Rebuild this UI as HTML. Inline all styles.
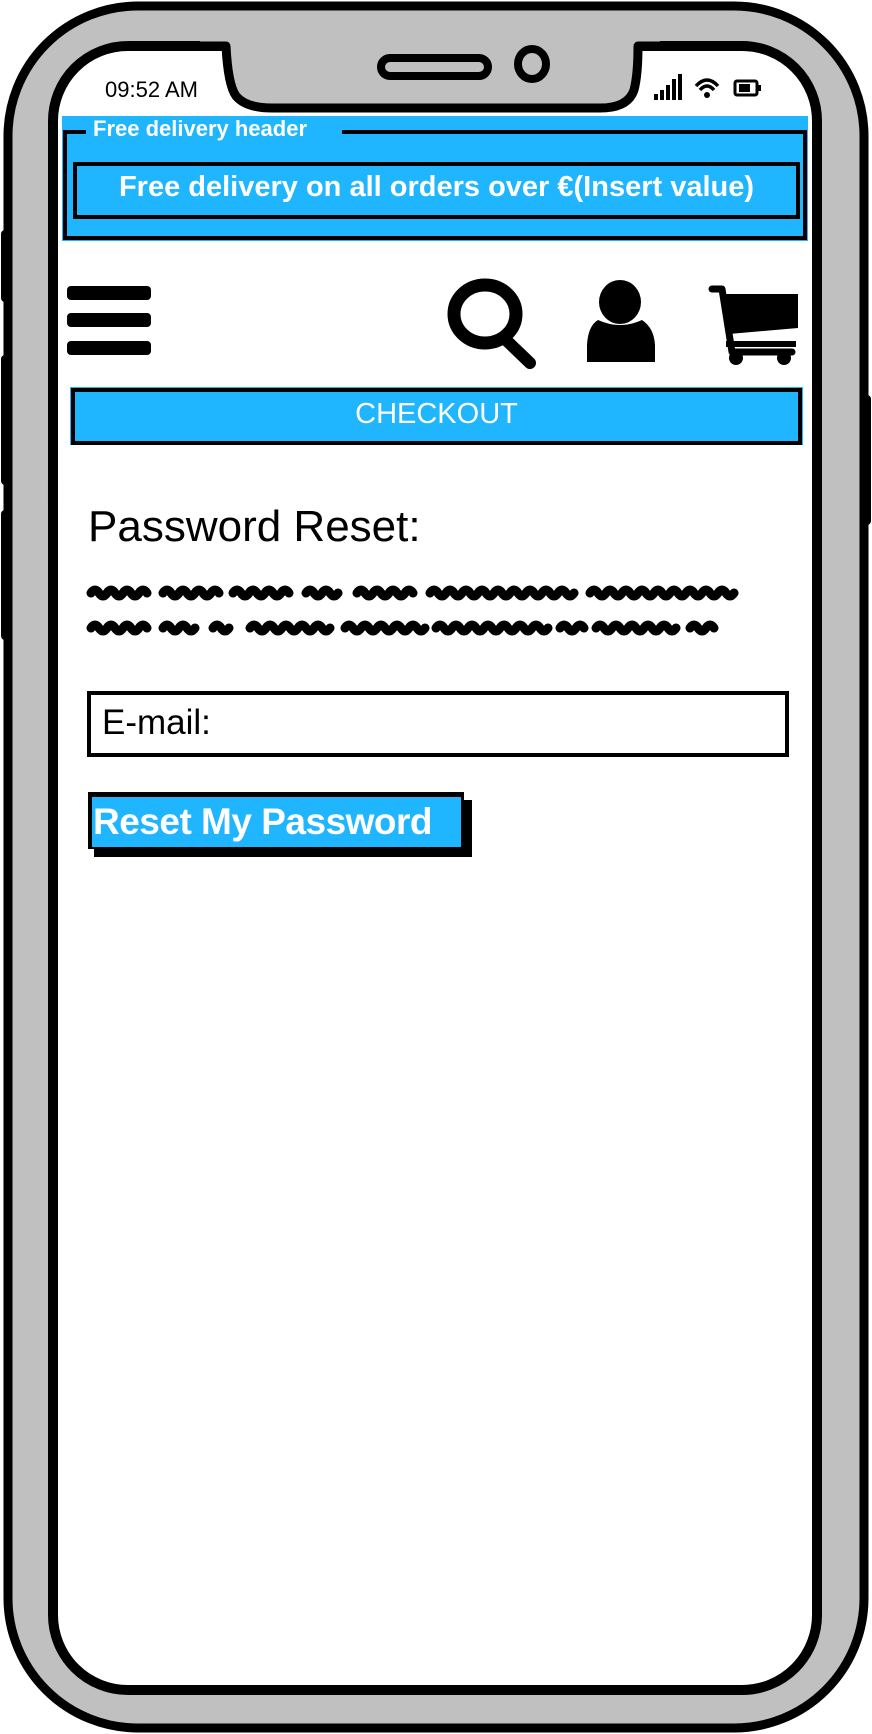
<!DOCTYPE html>
<html><head><meta charset="utf-8"><style>
html,body{margin:0;padding:0;background:#fff}
body{width:872px;height:1734px;position:relative;overflow:hidden;font-family:"Liberation Sans",sans-serif}
.a{position:absolute;white-space:nowrap}
</style></head><body>
<svg class="a" style="left:0;top:0" width="872" height="1734" viewBox="0 0 872 1734">
  <rect x="1" y="230" width="10" height="72" rx="4" fill="#000"/>
  <rect x="1" y="355" width="10" height="130" rx="4" fill="#000"/>
  <rect x="1" y="510" width="10" height="130" rx="4" fill="#000"/>
  <rect x="861" y="395" width="10" height="130" rx="4" fill="#000"/>
  <rect x="8" y="6" width="856" height="1722" rx="130" fill="#c0c0c0" stroke="#000" stroke-width="9"/>
  <rect x="53" y="46" width="764" height="1644" rx="75" fill="#fff" stroke="#000" stroke-width="10"/>
  <path d="M200 30 L200 46 L226 46 Q228 85 236 96 Q246 108 272 108 L600 108 Q628 108 634 90 Q638 75 638 46 L660 46 L660 30 Z" fill="#c0c0c0"/>
  <path d="M190 46 L226 46 Q228 85 236 96 Q246 108 272 108 L600 108 Q628 108 634 90 Q638 75 638 46 L675 46" fill="none" stroke="#000" stroke-width="9" stroke-linejoin="round"/>
  <rect x="381" y="58" width="107" height="18" rx="9" fill="none" stroke="#000" stroke-width="8"/>
  <ellipse cx="532" cy="64" rx="14" ry="15" fill="none" stroke="#000" stroke-width="8"/>
  <rect x="654" y="94" width="4" height="6" fill="#000"/>
  <rect x="660" y="90" width="4" height="10" fill="#000"/>
  <rect x="666" y="85" width="4" height="15" fill="#000"/>
  <rect x="672" y="79" width="4" height="21" fill="#000"/>
  <rect x="678" y="74" width="4" height="26" fill="#000"/>
  <path d="M696 86 Q707 74 718 86" fill="none" stroke="#000" stroke-width="3.5"/>
  <path d="M700 90 Q707 82 714 90" fill="none" stroke="#000" stroke-width="3.5"/>
  <circle cx="707" cy="95" r="3" fill="#000"/>
  <rect x="735" y="81" width="22" height="14" rx="2" fill="none" stroke="#000" stroke-width="3"/>
  <rect x="739" y="84" width="11" height="8" fill="#000"/>
  <rect x="758" y="85" width="3" height="6" fill="#000"/>
  <rect x="62" y="116" width="746" height="125" fill="#1fb5ff"/>
  <rect x="65" y="132" width="740" height="106" fill="none" stroke="#000" stroke-width="4"/>
  <rect x="86" y="122" width="256" height="18" fill="#1fb5ff"/>
  <rect x="75" y="164" width="723" height="53" fill="none" stroke="#000" stroke-width="4"/>
  <rect x="67" y="286" width="84" height="14" rx="4" fill="#000"/>
  <rect x="67" y="313" width="84" height="14" rx="4" fill="#000"/>
  <rect x="67" y="341" width="84" height="14" rx="4" fill="#000"/>
  <ellipse cx="485" cy="314" rx="31" ry="29" fill="none" stroke="#000" stroke-width="13"/>
  <path d="M506 340 L530 363" stroke="#000" stroke-width="12" stroke-linecap="round"/>
  <ellipse cx="620" cy="302" rx="21" ry="22" fill="#000"/>
  <path d="M598 320 Q620 330 642 320 Q654 328 655 345 L655 362 L587 362 L587 345 Q588 326 598 320 Z" fill="#000"/>
  <path d="M712 289 L722 289 L732 352 L792 352" fill="none" stroke="#000" stroke-width="7" stroke-linecap="round" stroke-linejoin="round"/>
  <path d="M722 294 L798 294 L798 328 L729 334 Z" fill="#000"/>
  <rect x="726" y="341" width="70" height="6" fill="#000"/>
  <ellipse cx="736" cy="358" rx="7" ry="7" fill="#000"/>
  <ellipse cx="784" cy="358" rx="7" ry="7" fill="#000"/>
  <rect x="70" y="387" width="733" height="58" fill="#1fb5ff"/>
  <rect x="73" y="390" width="727" height="53" fill="none" stroke="#000" stroke-width="4"/>
  <g fill="none" stroke="#000" stroke-width="9" stroke-linecap="round" stroke-linejoin="round">
    <path d="M91 593 q4 -6 8 0 t8 0 t8 0 t8 0 t8 0 t8 0 t8 0 M163 593 q4 -6 8 0 t8 0 t8 0 t8 0 t8 0 t8 0 t8 0 M233 593 q4 -6 8 0 t8 0 t8 0 t8 0 t8 0 t8 0 t8 0 M306 593 q4 -6 8 0 t8 0 t8 0 t8 0 M357 593 q4 -6 8 0 t8 0 t8 0 t8 0 t8 0 t8 0 t8 0 M430 593 q4 -6 8 0 t8 0 t8 0 t8 0 t8 0 t8 0 t8 0 t8 0 t8 0 t8 0 t8 0 t8 0 t8 0 t8 0 t8 0 t8 0 t8 0 t8 0 M590 593 q4 -6 8 0 t8 0 t8 0 t8 0 t8 0 t8 0 t8 0 t8 0 t8 0 t8 0 t8 0 t8 0 t8 0 t8 0 t8 0 t8 0 t8 0 t8 0"/>
    <path d="M91 628 q4 -6 8 0 t8 0 t8 0 t8 0 t8 0 t8 0 t8 0 M163 628 q4 -6 8 0 t8 0 t8 0 t8 0 M213 628 q4 -6 8 0 t8 0 M250 628 q4 -6 8 0 t8 0 t8 0 t8 0 t8 0 t8 0 t8 0 t8 0 t8 0 t8 0 M345 628 q4 -6 8 0 t8 0 t8 0 t8 0 t8 0 t8 0 t8 0 t8 0 t8 0 t8 0 M436 628 q4 -6 8 0 t8 0 t8 0 t8 0 t8 0 t8 0 t8 0 t8 0 t8 0 t8 0 t8 0 t8 0 t8 0 t8 0 M560 628 q4 -6 8 0 t8 0 t8 0 M596 628 q4 -6 8 0 t8 0 t8 0 t8 0 t8 0 t8 0 t8 0 t8 0 t8 0 t8 0 M690 628 q4 -6 8 0 t8 0 t8 0"/>
  </g>
  <rect x="89" y="693" width="698" height="62" fill="#fff" stroke="#000" stroke-width="4"/>
  <rect x="94" y="800" width="378" height="57" fill="#000"/>
  <rect x="88" y="792" width="376" height="57" fill="#000"/>
  <rect x="92" y="797" width="369" height="50" fill="#1fb5ff"/>
</svg>
<div class="a" style="left:105px;top:77px;font-size:22px;color:#000">09:52 AM</div>
<div class="a" style="left:93px;top:116px;font-size:22px;color:#fff;font-weight:bold">Free delivery header</div>
<div class="a" style="left:75px;top:171px;width:723px;text-align:center;font-size:29px;color:#fff;font-weight:bold">Free delivery on all orders over €(Insert value)</div>
<div class="a" style="left:70px;top:398px;width:733px;text-align:center;font-size:29px;color:#fff">CHECKOUT</div>
<div class="a" style="left:88px;top:502px;font-size:44px;color:#000">Password Reset:</div>
<div class="a" style="left:102px;top:703px;font-size:35px;color:#000">E-mail:</div>
<div class="a" style="left:93px;top:801px;font-size:37px;color:#fff;font-weight:bold;letter-spacing:-0.5px">Reset My Password</div>
</body></html>
